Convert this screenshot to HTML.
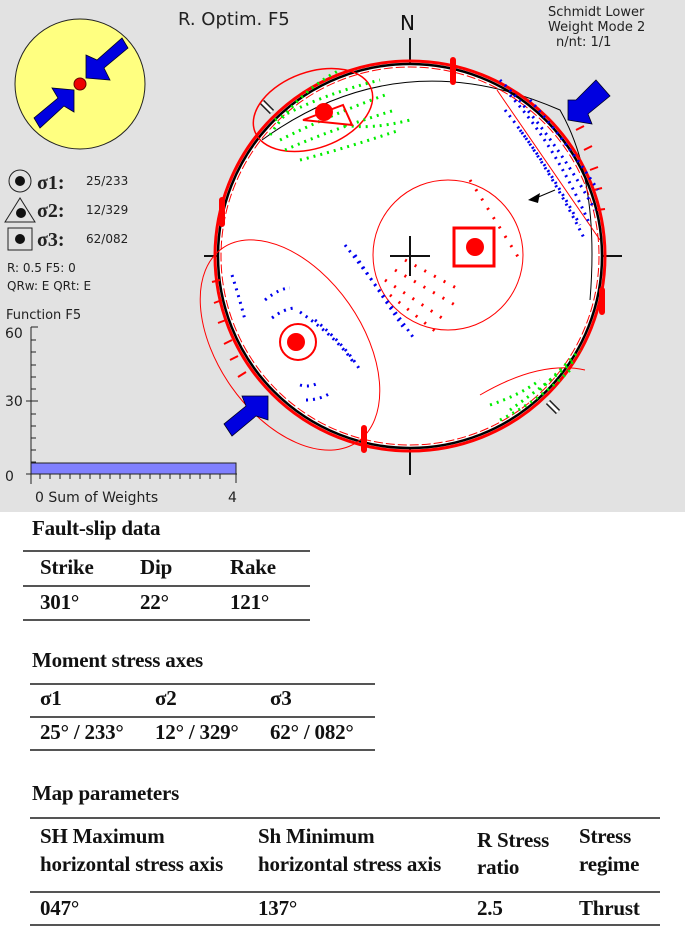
<!DOCTYPE html>
<html><head><meta charset="utf-8"><style>
body{margin:0;width:685px;height:927px;background:#fff;position:relative;overflow:hidden;font-family:"Liberation Sans",sans-serif}
.t{position:absolute;font-family:"Liberation Serif",serif;font-weight:bold;font-size:21px;color:#111;letter-spacing:-0.2px;white-space:nowrap}
.r{position:absolute;height:1.5px;background:#555}
</style></head><body>
<svg width="685" height="512" style="position:absolute;left:0;top:0">
<rect width="685" height="512" fill="#e2e2e2"/>
<text x="178" y="25" font-family="DejaVu Sans" font-size="18" fill="#222">R. Optim. F5</text>
<text x="400" y="30" font-family="DejaVu Sans" font-size="20" fill="#111">N</text>
<text x="548" y="16" font-family="DejaVu Sans" font-size="13" fill="#222">Schmidt Lower</text>
<text x="548" y="31" font-family="DejaVu Sans" font-size="13" fill="#222">Weight Mode 2</text>
<text x="556" y="46" font-family="DejaVu Sans" font-size="13" fill="#222">n/nt: 1/1</text>
<circle cx="80" cy="84" r="65" fill="#ffff80" stroke="#222" stroke-width="1"/>
<polygon points="122,38 128,48 104,68 110,80 86,78 86,55 97,60" fill="#0000e0" stroke="#002" stroke-width=".8"/>
<polygon points="40,128 34,118 58,98 52,88 74,90 74,112 64,106" fill="#0000e0" stroke="#002" stroke-width=".8"/>
<circle cx="80" cy="84" r="6" fill="#e00" stroke="#600"/>
<circle cx="20" cy="181" r="11" fill="none" stroke="#222"/><circle cx="20" cy="181" r="5" fill="#111"/>
<polygon points="20,198 5,222 35,222" fill="none" stroke="#222"/><circle cx="21" cy="213" r="5" fill="#111"/>
<rect x="8" y="228" width="24" height="22" fill="none" stroke="#222"/><circle cx="20" cy="239" r="5" fill="#111"/>
<g font-family="Liberation Serif" font-weight="bold" font-size="20" fill="#222"><text x="37" y="189">σ1:</text><text x="37" y="217">σ2:</text><text x="37" y="246">σ3:</text></g>
<g font-family="DejaVu Sans" font-size="12" fill="#222"><text x="86" y="185">25/233</text><text x="86" y="214">12/329</text><text x="86" y="243">62/082</text>
<text x="7" y="272">R: 0.5  F5: 0</text><text x="7" y="290">QRw: E  QRt: E</text>
<text x="6" y="319" font-size="13">Function F5</text>
<text x="5" y="338" font-size="14">60</text><text x="5" y="406" font-size="14">30</text><text x="5" y="481" font-size="14">0</text>
<text x="35" y="502" font-size="14">0  Sum of Weights</text><text x="228" y="502" font-size="14">4</text></g>
<line x1="31" y1="327" x2="31" y2="484" stroke="#222"/>
<line x1="31" y1="327" x2="38" y2="327" stroke="#222"/>
<path d="M31 340h5M31 352h5M31 365h5M31 377h5M31 389h5M31 414h5M31 426h5M31 438h5M31 450h5M31 462h5" stroke="#222"/>
<line x1="26" y1="401" x2="38" y2="401" stroke="#222"/>
<line x1="26" y1="474" x2="237" y2="474" stroke="#222"/>
<rect x="31" y="463" width="205" height="11" fill="#8080ff" stroke="#222"/>
<path d="M40 474v5M50 474v5M60 474v5M70 474v5M80 474v5M90 474v5M100 474v5M110 474v5M120 474v5M130 474v5M140 474v5M150 474v5M160 474v5M170 474v5M180 474v5M190 474v5M200 474v5M210 474v5M220 474v5M236 474v9" stroke="#222"/>
<path d="M410 38v30M410 445v30M204 256h24M592 256h30" stroke="#111" stroke-width="2"/>
<circle cx="410" cy="256" r="192" fill="#fff"/>
<path d="M262 102l10 10M548 402l10 10" stroke="#222" stroke-width="6"/><path d="M262 102l10 10M548 402l10 10" stroke="#fff" stroke-width="3"/>
<circle cx="410" cy="256" r="192" fill="none" stroke="#000" stroke-width="2.5"/>
<path d="M262 140 Q400 40 560 110 Q600 180 590 300" fill="none" stroke="#000" stroke-width="1"/>
<circle cx="410" cy="256" r="195" fill="none" stroke="#f00" stroke-width="3"/>
<circle cx="410" cy="256" r="189" fill="none" stroke="#f00" stroke-width="1" stroke-dasharray="9 3"/>
<path d="M220 280 l-8 2 M222 300 l-8 3 M226 320 l-8 3 M232 340 l-8 4 M238 356 l-8 4 M246 372 l-8 5 M576 130l8-4 M584 150l8-4 M590 170l8-3 M594 190l8-2 M597 210l8-1" stroke="#f00" stroke-width="2"/>
<path d="M453 60v22M364 428v22M222 200v24M602 290v22" stroke="#f00" stroke-width="6" stroke-linecap="round"/>
<ellipse cx="313" cy="110" rx="62" ry="38" transform="rotate(-20 313 110)" fill="none" stroke="#f00" stroke-width="1.5"/>
<ellipse cx="290" cy="345" rx="72" ry="118" transform="rotate(-35 290 345)" fill="none" stroke="#f00" stroke-width="1"/>
<circle cx="448" cy="255" r="75" fill="none" stroke="#f00" stroke-width="1"/>
<path d="M480 395 Q540 360 585 370" fill="none" stroke="#f00"/>
<path d="M497 90 L600 240" stroke="#f00" stroke-width="1"/>
<g fill="none" stroke="#0e0" stroke-width="3" stroke-dasharray="2 5">
<path d="M275 120 Q320 95 380 80"/><path d="M280 140 Q330 115 385 95"/><path d="M285 150 Q330 130 395 110"/><path d="M300 160 Q340 150 400 130"/><path d="M270 135 Q300 90 340 70"/><path d="M345 125 Q370 130 410 120"/>
<path d="M500 420 Q540 400 570 370"/><path d="M510 410 Q545 385 575 360"/><path d="M490 405 Q520 395 540 380"/><path d="M540 390 Q560 370 580 350"/>
</g>
<g fill="none" stroke="#00e" stroke-width="3" stroke-dasharray="2 5">
<path d="M500 80 Q550 130 595 210"/><path d="M510 95 Q555 145 590 225"/><path d="M505 110 Q545 160 585 240"/><path d="M530 100 Q565 140 598 190"/><path d="M520 130 Q550 170 580 225"/>
<path d="M345 245 Q380 290 415 340"/><path d="M355 255 Q385 300 405 330"/>
<path d="M300 312 Q340 340 355 365"/><path d="M315 320 Q345 345 360 370"/><path d="M265 300 Q280 288 290 288"/><path d="M272 318 Q285 308 296 308"/><path d="M300 385 Q310 388 320 382"/><path d="M306 400 Q320 400 332 392"/>
<path d="M232 275 Q240 300 245 320"/>
</g>
<g fill="none" stroke="#f00" stroke-width="3" stroke-dasharray="2 9">
<path d="M385 280 L445 320"/><path d="M390 295 L440 335"/><path d="M395 270 L455 305"/><path d="M405 260 L460 290"/><path d="M470 180 L520 260"/>
</g>
<polygon points="303,120 343,105 352,125" fill="none" stroke="#f00" stroke-width="2"/><circle cx="324" cy="112" r="9" fill="#f00"/>
<rect x="454" y="228" width="40" height="38" fill="none" stroke="#f00" stroke-width="3"/><circle cx="475" cy="247" r="9" fill="#f00"/>
<circle cx="298" cy="342" r="18" fill="none" stroke="#f00" stroke-width="2"/><circle cx="296" cy="342" r="9" fill="#f00"/>
<path d="M410 236v40M390 256h40" stroke="#111" stroke-width="2"/>
<polygon points="596,80 610,96 588,114 592,124 568,120 568,100 576,100" fill="#0000e0" stroke="#002" stroke-width=".8"/>
<polygon points="232,436 224,424 246,406 242,396 268,396 268,420 256,416" fill="#0000e0" stroke="#002" stroke-width=".8"/>
<polygon points="528,200 540,193 538,203" fill="#000"/><path d="M536 198 L555 190" stroke="#000"/>
</svg>
<div class="t" style="left:32px;top:516px">Fault-slip data</div>
<div class="r" style="left:23px;top:550px;width:287px"></div>
<div class="t" style="left:40px;top:555px">Strike</div><div class="t" style="left:140px;top:555px">Dip</div><div class="t" style="left:230px;top:555px">Rake</div>
<div class="r" style="left:23px;top:585px;width:287px"></div>
<div class="t" style="left:40px;top:590px">301°</div><div class="t" style="left:140px;top:590px">22°</div><div class="t" style="left:230px;top:590px">121°</div>
<div class="r" style="left:23px;top:619px;width:287px"></div>
<div class="t" style="left:32px;top:648px">Moment stress axes</div>
<div class="r" style="left:30px;top:683px;width:345px"></div>
<div class="t" style="left:40px;top:686px">σ1</div><div class="t" style="left:155px;top:686px">σ2</div><div class="t" style="left:270px;top:686px">σ3</div>
<div class="r" style="left:30px;top:716px;width:345px"></div>
<div class="t" style="left:40px;top:720px">25° / 233°</div><div class="t" style="left:155px;top:720px">12° / 329°</div><div class="t" style="left:270px;top:720px">62° / 082°</div>
<div class="r" style="left:30px;top:749px;width:345px"></div>
<div class="t" style="left:32px;top:781px">Map parameters</div>
<div class="r" style="left:30px;top:817px;width:630px"></div>
<div class="t" style="left:40px;top:822px;line-height:28px">SH Maximum<br>horizontal stress axis</div>
<div class="t" style="left:258px;top:822px;line-height:28px">Sh Minimum<br>horizontal stress axis</div>
<div class="t" style="left:477px;top:827px;line-height:27px">R Stress<br>ratio</div>
<div class="t" style="left:579px;top:822px;line-height:28px">Stress<br>regime</div>
<div class="r" style="left:30px;top:891px;width:630px"></div>
<div class="t" style="left:40px;top:896px">047°</div><div class="t" style="left:258px;top:896px">137°</div><div class="t" style="left:477px;top:896px">2.5</div><div class="t" style="left:579px;top:896px">Thrust</div>
<div class="r" style="left:30px;top:924px;width:630px"></div>
</body></html>
